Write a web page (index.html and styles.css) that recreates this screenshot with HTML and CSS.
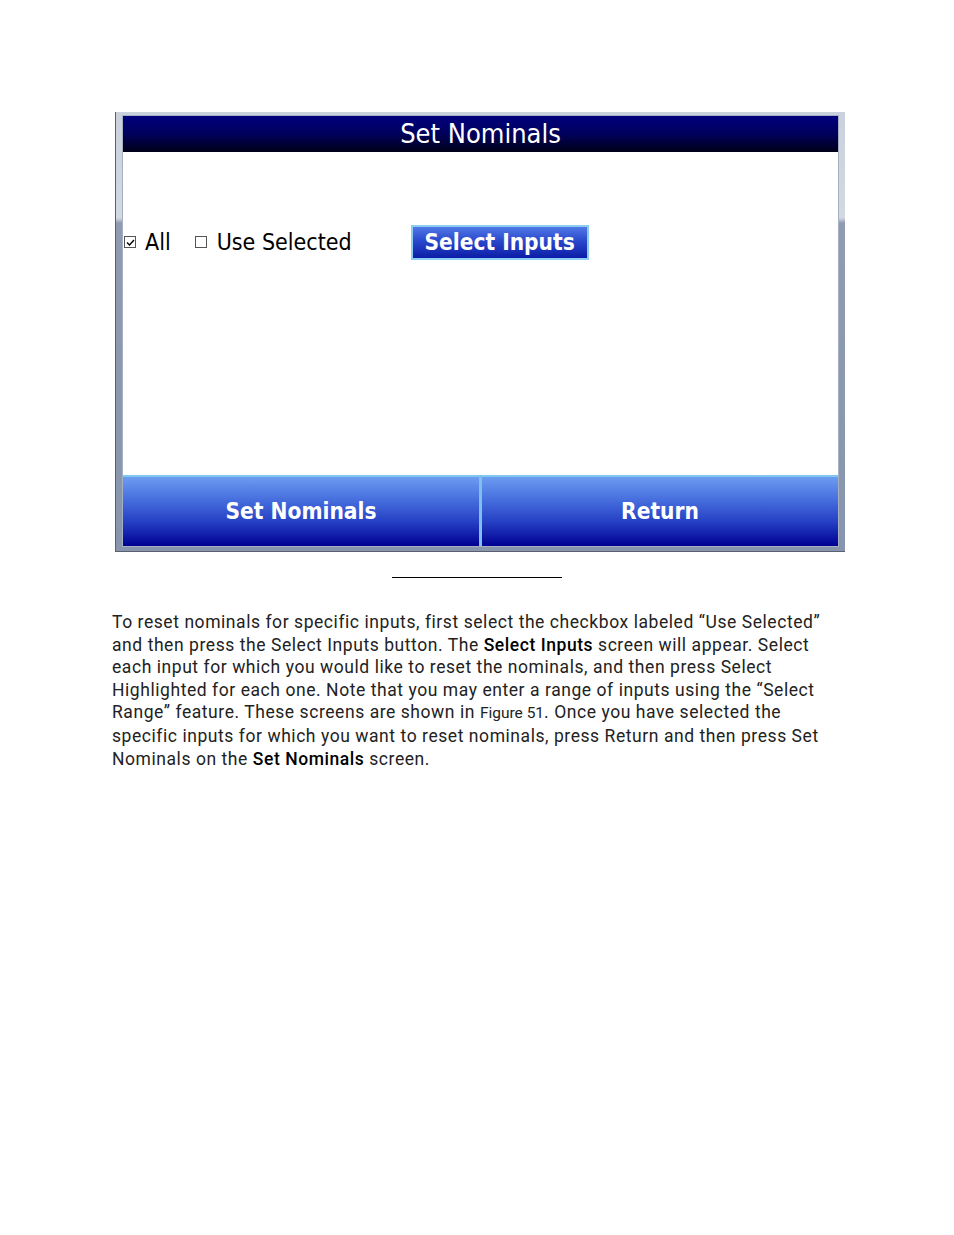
FILE: index.html
```html
<!DOCTYPE html>
<html>
<head>
<meta charset="utf-8">
<link rel="stylesheet" href="styles.css">
</head>
<body>
<div class="page">
  <div class="frame">
    <div class="inner">
      <div class="titlebar">Set Nominals</div>
      <div class="content">
        <div class="row">
          <label class="opt opt-all"><span class="box"><svg width="9" height="7" viewBox="0 0 9 7"><path d="M1 3.5 L3.5 6 L8 1" fill="none" stroke="#000" stroke-width="1.4"/></svg></span><span class="lbl">All</span></label>
          <label class="opt opt-sel"><span class="box"></span><span class="lbl">Use Selected</span></label>
          <div class="selbtn">Select Inputs</div>
        </div>
      </div>
      <div class="buttons">
        <div class="bbtn">Set Nominals</div>
        <div class="sep"></div>
        <div class="bbtn">Return</div>
      </div>
    </div>
  </div>
  <div class="rule"></div>
  <p class="text">To reset nominals for specific inputs, first select the checkbox labeled “Use Selected”<br>and then press the Select Inputs button. The <b>Select Inputs</b> screen will appear. Select<br>each input for which you would like to reset the nominals, and then press Select<br>Highlighted for each one. Note that you may enter a range of inputs using the “Select<br>Range” feature. These screens are shown in <span class="fig">Figure 51</span>. Once you have selected the<br>specific inputs for which you want to reset nominals, press Return and then press Set<br>Nominals on the <b>Set Nominals</b> screen.</p>
</div>
</body>
</html>
```

FILE: styles.css
```css
html, body {
  margin: 0;
  padding: 0;
  background: #fff;
}
.page {
  width: 954px;
  height: 1235px;
  padding-top: 112px;
  box-sizing: border-box;
}
.frame {
  margin-left: 115px;
  width: 730px;
  box-sizing: border-box;
  padding: 4px 7px 5px 7px;
  background: linear-gradient(#c9d1dc 0, #d2d9e3 106px, #8e9bb1 111px, #8896ad 100%);
  border-left: 1px solid #5a6070;
  border-bottom: 1px solid #5a6070;
}
.inner {
  box-shadow: 0 0 0 1px #a6b0c0;
  background: #fff;
}
.titlebar {
  height: 36px;
  background: linear-gradient(#00007e 0%, #00005c 50%, #000018 100%);
  color: #fff;
  font-family: "DejaVu Sans Condensed", "DejaVu Sans", sans-serif;
  font-size: 27px;
  line-height: 36px;
  text-align: center;
}
.content {
  height: 323px;
  background: #fff;
}
.row {
  display: flex;
  align-items: center;
  padding-top: 72px;
  height: 36px;
  font-family: "DejaVu Sans Condensed", "DejaVu Sans", sans-serif;
  font-size: 23px;
  color: #000;
}
.opt {
  display: flex;
  align-items: center;
}
.box {
  width: 10px;
  height: 10px;
  border: 1px solid #555;
  background: #fff;
  display: flex;
  align-items: center;
  justify-content: center;
}
.opt-all {
  margin-left: 1px;
}
.opt-all .lbl {
  margin-left: 9px;
}
.opt-sel {
  margin-left: 24px;
}
.opt-sel .lbl {
  margin-left: 10px;
}
.selbtn {
  margin-left: 59px;
  width: 178px;
  height: 35px;
  box-sizing: border-box;
  border: 2px solid #8ccdf2;
  background: linear-gradient(#5078e6 0%, #2a48cc 45%, #0c1ca6 100%);
  color: #fff;
  font-weight: bold;
  font-size: 22.5px;
  line-height: 31px;
  text-align: center;
}
.buttons {
  display: flex;
  height: 71px;
}
.bbtn {
  flex: 1;
  background: linear-gradient(#6c9cf0 0%, #4a72e0 30%, #2540c4 65%, #000092 100%);
  border-top: 2px solid #80c8f0;
  color: #fff;
  font-family: "DejaVu Sans Condensed", "DejaVu Sans", sans-serif;
  font-weight: bold;
  font-size: 22.5px;
  line-height: 69px;
  text-align: center;
}
.sep {
  width: 3px;
  background: #7ec0ea;
}
.rule {
  margin: 25px 0 0 392px;
  width: 170px;
  height: 1px;
  background: #000;
}
.text {
  margin: 33px 0 0 112px;
  font-family: "Roboto", "Liberation Sans", sans-serif;
  font-size: 17.5px;
  letter-spacing: 0.56px;
  line-height: 22.6px;
  color: #222;
}
.text b {
  font-weight: 500;
  color: #000;
}
.fig {
  font-size: 15.5px;
  letter-spacing: 0;
}
```
